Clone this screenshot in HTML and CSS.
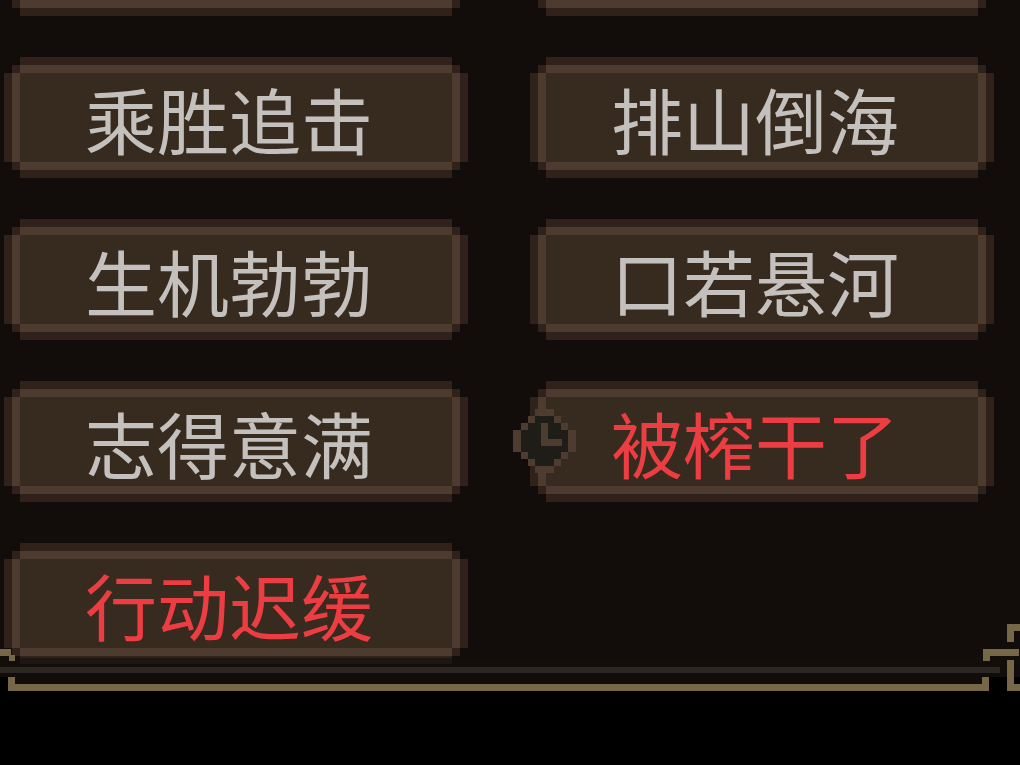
FILE: index.html
```
<!DOCTYPE html>
<html lang="zh-CN">
<head>
    <meta charset="UTF-8">
    <meta name="viewport" content="width=device-width, initial-scale=1.0">
    <title>状态</title>
    <link rel="stylesheet" href="styles.css">
</head>
<body>
<main class="panel">
    <div class="traits">
        <div class="trait"></div>
        <div class="trait"></div>
        <button class="trait" type="button">乘胜追击</button>
        <button class="trait" type="button">排山倒海</button>
        <button class="trait" type="button">生机勃勃</button>
        <button class="trait" type="button">口若悬河</button>
        <button class="trait" type="button">志得意满</button>
        <button class="trait bad" type="button">
            <svg class="clock" viewBox="0 0 64 72" aria-hidden="true">
                <path fill="#1f1d18" d="M22 11h19v7h7v7h7v22h-7v7h-7v7H22v-7h-7v-7H8V25h7v-7h7z"/>
                <path fill="#4e3c31" d="M25 0h8v4h8v7H22V4h3zM15 11h7v7h-7zM41 11h7v7h-7zM8 18h7v7H8zM48 18h7v7h-7zM0 25h8v22H0zM55 25h8v22h-8zM8 47h7v7H8zM48 47h7v7h-7zM15 54h7v7h-7zM41 54h7v7h-7zM22 61h19v7h-8v4h-8v-4h-3z"/>
                <path fill="#4e3c31" d="M28 18h7v16h14v7H28z"/>
            </svg>
            被榨干了
        </button>
        <button class="trait bad" type="button">行动迟缓</button>
    </div>
    <div class="frame">
        <svg class="corner left" viewBox="0 0 16 69" aria-hidden="true">
            <path fill="#766749" d="M0 27h11v6h4v6H9v-5H0z"/>
        </svg>
        <svg class="corner right" viewBox="0 0 40 69" aria-hidden="true">
            <path fill="#766749" d="M3 27h36v7H10v5H3zM27 2h13v7h-6v11h-7zM27 38h7v24h6v7H27z"/>
        </svg>
    </div>
</main>
</body>
</html>
```
FILE: styles.css
```
body {
    margin: 0;
    background: #000;
    font-family: "Noto Sans CJK SC", sans-serif;
    overflow: hidden;
}

.panel {
    overflow: hidden;
}

/* list is scrolled, the first row is mostly above the panel */
.traits {
    display: grid;
    grid-template-columns: 1fr 1fr;
    gap: 41px 62px;
    margin-top: -105px;
    padding: 0 26px 0 4px;
    background: #120d0a;
}

/* stepped pixel border: fill, light ring, dark ring */
.trait {
    position: relative;
    box-sizing: border-box;
    height: 121px;
    padding: 0 0 0 81px;
    border: none;
    background:
        linear-gradient(#372a1f, #372a1f) center / calc(100% - 32px) calc(100% - 32px) no-repeat,
        linear-gradient(#4e3b30, #4e3b30) center / calc(100% - 32px) calc(100% - 16px) no-repeat,
        linear-gradient(#4e3b30, #4e3b30) center / calc(100% - 16px) calc(100% - 32px) no-repeat,
        linear-gradient(#30211a, #30211a) center / calc(100% - 16px) calc(100% - 16px) no-repeat,
        linear-gradient(#30211a, #30211a) center / calc(100% - 32px) 100% no-repeat,
        linear-gradient(#30211a, #30211a) center / 100% calc(100% - 32px) no-repeat;
    color: #c3c0be;
    font-family: inherit;
    font-size: 72px;
    line-height: 118px;
    text-align: left;
    white-space: nowrap;
    cursor: pointer;
}

.trait.bad {
    color: #ec3d42;
}

.clock {
    position: absolute;
    left: -17px;
    top: 24px;
    width: 64px;
    height: 72px;
}

/* bottom edge, shades the end of the list */
.frame {
    position: relative;
    margin-top: -6px;
    padding-top: 19px;
    background:
        linear-gradient(#2d2722, #2d2722) 0 9px / calc(100% - 20px) 6px no-repeat,
        linear-gradient(rgba(18, 15, 11, 0.6), rgba(18, 15, 11, 0.6)) 0 0 / 100% 6px no-repeat,
        linear-gradient(#120d0a, #120d0a) 0 6px / 100% 13px no-repeat;
}

.frame::after {
    content: "";
    display: block;
    height: 7px;
    margin: 0 31px 0 8px;
    border: 7px solid #766749;
    border-top: none;
    background: #120d0a;
}

.corner {
    position: absolute;
    bottom: 0;
    height: 69px;
}

.corner.left {
    left: 0;
    width: 16px;
}

.corner.right {
    right: 0;
    width: 40px;
}
```
